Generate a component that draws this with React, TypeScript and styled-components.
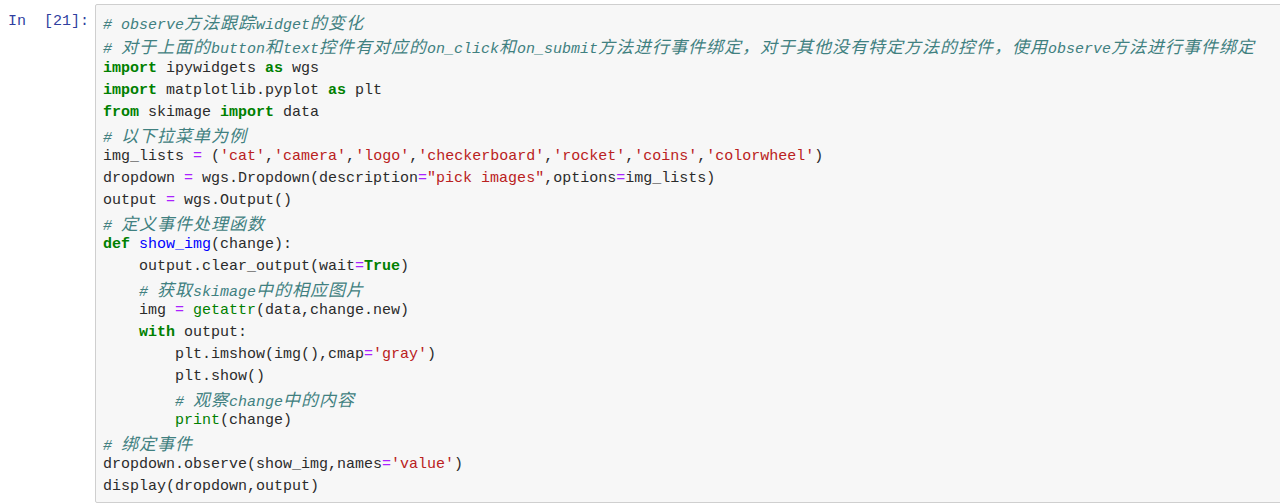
import React from "react";
import styled, { createGlobalStyle, css } from "styled-components";

const Global = createGlobalStyle`
  html, body { margin: 0; padding: 0; background: #ffffff; }
  body { width: 1280px; height: 504px; overflow: hidden; }
`;

const MONO = `"Liberation Mono", "DejaVu Sans Mono", "Noto Sans CJK SC", monospace`;

const Page = styled.div`
  display: flex;
  align-items: flex-start;
  padding-top: 4px;
  width: 1300px;
`;

const Prompt = styled.div`
  flex: 0 0 95px;
  box-sizing: border-box;
  padding: 7px 6px 0 8px;
  font-family: ${MONO};
  font-size: 15px;
  line-height: 22px;
  color: #303f9f;
  white-space: pre;
`;

const Editor = styled.div`
  flex: 1 1 auto;
  box-sizing: border-box;
  height: 499px;
  background: #f7f7f7;
  border: 1px solid #cfcfcf;
  border-radius: 2px;
  padding: 5px 7px 5px 7px;
`;

const Line = styled.div<{ $tall?: boolean }>`
  font-family: ${MONO};
  font-size: 15px;
  line-height: ${(p) => (p.$tall ? "24px" : "22px")};
  height: ${(p) => (p.$tall ? "24px" : "22px")};
  white-space: pre;
  color: #2b2b2b;
`;

type Kind = "kw" | "cm" | "st" | "op" | "df" | "bi" | "tx";

const kindStyles: Record<Kind, ReturnType<typeof css>> = {
  kw: css`color: #008000; font-weight: bold;`,
  cm: css`color: #408080; font-style: italic;`,
  st: css`color: #ba2121;`,
  op: css`color: #aa22ff;`,
  df: css`color: #0000ff;`,
  bi: css`color: #008000;`,
  tx: css``,
};

const Tok = styled.span<{ $k: Kind }>`
  ${(p) => kindStyles[p.$k]}
`;

const Cjk = styled.span`
  font-family: "Noto Sans CJK SC", sans-serif;
  font-size: 17px;
  letter-spacing: 1px;
`;

const CJK_RE = /([\u3000-\u303f\u4e00-\u9fff\uff00-\uffef]+)/;

function renderText(s: string) {
  return s.split(CJK_RE).map((part, i) =>
    i % 2 === 1 ? <Cjk key={i}>{part}</Cjk> : part
  );
}

type T = [Kind, string];
const k = (s: string): T => ["kw", s];
const c = (s: string): T => ["cm", s];
const st = (s: string): T => ["st", s];
const o = (s: string): T => ["op", s];
const d = (s: string): T => ["df", s];
const b = (s: string): T => ["bi", s];
const t = (s: string): T => ["tx", s];

const code: T[][] = [
  [c("# observe方法跟踪widget的变化")],
  [c("# 对于上面的button和text控件有对应的on_click和on_submit方法进行事件绑定，对于其他没有特定方法的控件，使用observe方法进行事件绑定")],
  [k("import"), t(" ipywidgets "), k("as"), t(" wgs")],
  [k("import"), t(" matplotlib.pyplot "), k("as"), t(" plt")],
  [k("from"), t(" skimage "), k("import"), t(" data")],
  [c("# 以下拉菜单为例")],
  [t("img_lists "), o("="), t(" ("), st("'cat'"), t(","), st("'camera'"), t(","), st("'logo'"), t(","), st("'checkerboard'"), t(","), st("'rocket'"), t(","), st("'coins'"), t(","), st("'colorwheel'"), t(")")],
  [t("dropdown "), o("="), t(" wgs.Dropdown(description"), o("="), st("\"pick images\""), t(",options"), o("="), t("img_lists)")],
  [t("output "), o("="), t(" wgs.Output()")],
  [c("# 定义事件处理函数")],
  [k("def"), t(" "), d("show_img"), t("(change):")],
  [t("    output.clear_output(wait"), o("="), k("True"), t(")")],
  [t("    "), c("# 获取skimage中的相应图片")],
  [t("    img "), o("="), t(" "), b("getattr"), t("(data,change.new)")],
  [t("    "), k("with"), t(" output:")],
  [t("        plt.imshow(img(),cmap"), o("="), st("'gray'"), t(")")],
  [t("        plt.show()")],
  [t("        "), c("# 观察change中的内容")],
  [t("        "), b("print"), t("(change)")],
  [c("# 绑定事件")],
  [t("dropdown.observe(show_img,names"), o("="), st("'value'"), t(")")],
  [t("display(dropdown,output)")],
];

export default function App() {
  return (
    <>
      <Global />
      <Page>
        <Prompt>{"In  [21]:"}</Prompt>
        <Editor>
          {code.map((line, i) => (
            <Line key={i} $tall={i < 2}>
              {line.map(([kind, text], j) => (
                <Tok key={j} $k={kind}>
                  {renderText(text)}
                </Tok>
              ))}
            </Line>
          ))}
        </Editor>
      </Page>
    </>
  );
}
